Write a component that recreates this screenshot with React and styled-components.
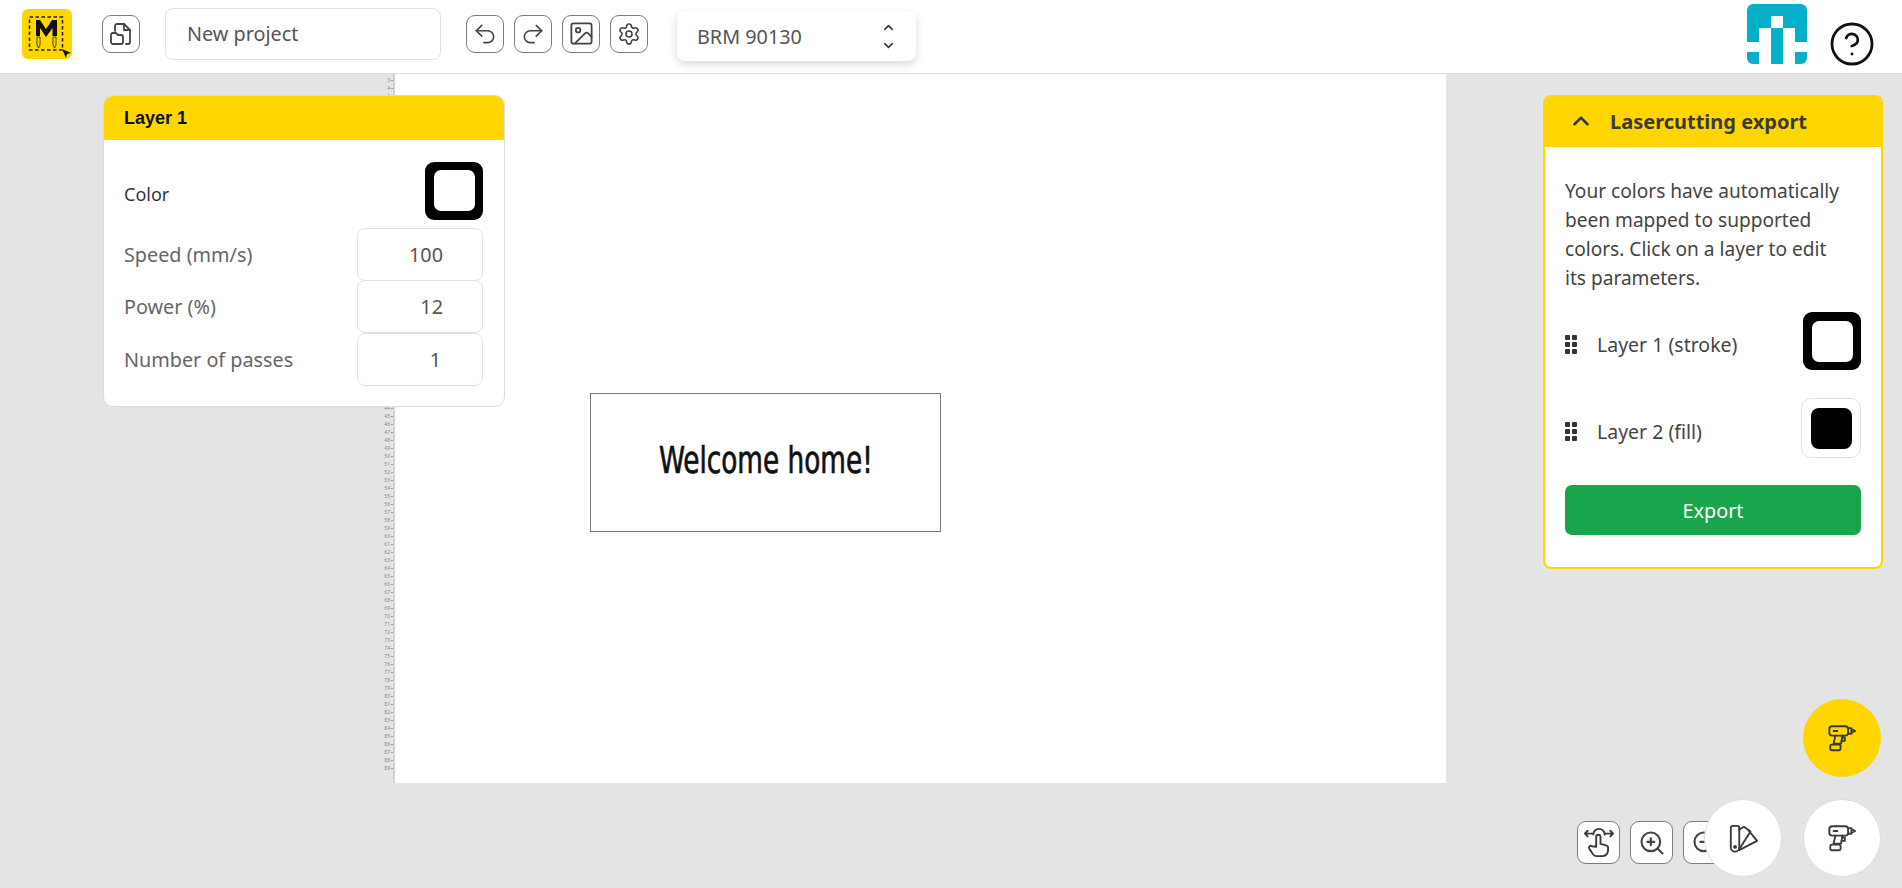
import React from "react";
import styled, { createGlobalStyle } from "styled-components";
import {
  ChevronDown,
  ChevronUp,
  CircleHelp,
  Image,
  Redo2,
  Settings,
  Undo2,
  ZoomIn,
  ZoomOut,
} from "lucide-react";

const rulerMarks = Array.from({ length: 87 }, (_, i) => i + 3);

const Global = createGlobalStyle`
  html, body {
    margin: 0;
    height: 100%;
    overflow: hidden;
    font-family: "Noto Sans", "Open Sans", sans-serif;
    color: #444;
  }
  * { box-sizing: border-box; }
`;

const DrillIcon = () => (
  <svg width="30" height="30" viewBox="0 0 32 32" fill="none" stroke="#3a3a3a" strokeWidth="2" strokeLinejoin="round" strokeLinecap="round">
    <rect x="2.500" y="3.500" width="20" height="10" rx="3" />
    <path d="M7 8.500h4" />
    <path d="M22.500 5.500h3.500v6h-3.500M26 6.500l4 2-4 2" />
    <path d="M9 13.500l-2 8.500h8l1.500-8.500" />
    <path d="M16 15.500h3v3.500h-3.500" />
    <rect x="3.500" y="23" width="11" height="6" rx="1.500" />
  </svg>
);

const SwatchIcon = () => (
  <svg width="30" height="30" viewBox="0 0 32 32" fill="none" stroke="#3a3a3a" strokeWidth="2" strokeLinejoin="round" strokeLinecap="round">
    <path d="M3 5a2 2 0 0 1 2-2h5a2 2 0 0 1 2 2v21a4.500 4.500 0 0 1-9 0z" />
    <circle cx="7.500" cy="25.500" r="1" />
    <path d="M12 7l5-3 7 5-12 19" />
    <path d="M22 8l9 11-19 10" />
  </svg>
);

const PanIcon = () => (
  <svg width="32" height="32" viewBox="0 0 34 34" fill="none" stroke="#3a3a3a" strokeWidth="2" strokeLinejoin="round" strokeLinecap="round">
    <path d="M2 7h8M24 7h8M5 4L2 7l3 3M29 4l3 3-3 3" />
    <path d="M11 8a6 6 0 0 1 12 0" />
    <path d="M14 21V10.500a2.300 2.300 0 0 1 4.600 0V18l6 1.500a2.500 2.500 0 0 1 2 2.500v3a6 6 0 0 1-6 6h-6a5 5 0 0 1-4-2l-4-6a2 2 0 0 1 3-2.500z" />
  </svg>
);

const FileIcon = () => (
  <svg width="24" height="24" viewBox="0 0 24 24" fill="none" stroke="#444" strokeWidth="1.800" strokeLinejoin="round" strokeLinecap="round">
    <path d="M6 9V4a2 2 0 0 1 2-2h7l6 6v12a2 2 0 0 1-2 2h-2" />
    <path d="M15 2v6h6" />
    <path d="M2 13a2 2 0 0 1 2-2h3l2 2h3a2 2 0 0 1 2 2v5a2 2 0 0 1-2 2H4a2 2 0 0 1-2-2z" />
  </svg>
);

const LogoMark = () => (
  <svg width="50" height="50" viewBox="0 0 50 50" fill="none">
    <rect x="7.500" y="8" width="33" height="33" stroke="#222" strokeWidth="1.500" strokeDasharray="3.500 2.500" />
    <path d="M14 27V11h4l6 9 6-9h5v16h-4.500V19l-6.500 9-6-9v8z" fill="#111" />
    <path d="M15 28h3v8l-1.500 3-1.500-3zM31 28h3v8l-1.500 3-1.500-3z" stroke="#444" strokeWidth="1" />
    <path d="M40 40l9 4-4 1-1 4z" fill="#111" />
  </svg>
);

const TealLogo = () => (
  <svg width="60" height="60" viewBox="0 0 60 60">
    <rect width="60" height="60" rx="6" fill="#04afc8" />
    <path d="M24 12h12v12H24zM12 24h12v36H12zM36 24h12v36H36zM0 38h24v10H0zM36 38h24v10H36z" fill="#fff" />
  </svg>
);

const Page = styled.div`
  display: flex;
  flex-direction: column;
  height: 888px;
  background: #e4e4e4;
  position: relative;
  overflow: hidden;
`;

const Header = styled.header`
  display: flex;
  align-items: center;
  height: 74px;
  flex-shrink: 0;
  padding: 0 26px 6px 22px;
  background: #fff;
  border-bottom: 1px solid #ddd;
`;

const AppLogo = styled.div`
  width: 50px;
  height: 50px;
  border-radius: 6px;
  background: #ffd600;
  margin-right: 30px;
`;

const IconButton = styled.button`
  display: flex;
  align-items: center;
  justify-content: center;
  flex-shrink: 0;
  width: ${(p) => p.$size || 38}px;
  height: ${(p) => p.$size || 38}px;
  padding: 0;
  background: #fff;
  border: 1.800px solid #7c7c7c;
  border-radius: 9px;
  color: #444;
`;

const ProjectInput = styled.div`
  display: flex;
  align-items: center;
  width: 276px;
  height: 52px;
  margin: 0 25px 0 25px;
  padding-left: 21px;
  font-size: 19.800px;
  color: #555;
  background: #fff;
  border: 1.500px solid #dfe1e6;
  border-radius: 8px;
`;

const ToolGroup = styled.div`
  display: flex;
  gap: 10px;
`;

const MachineSelect = styled.div`
  display: flex;
  align-items: center;
  justify-content: space-between;
  width: 239px;
  height: 50px;
  margin: 5px 0 0 29px;
  padding: 0 20px;
  font-size: 19.800px;
  color: #555;
  background: #fff;
  border-radius: 8px;
  box-shadow: 0 3px 8px rgba(0, 0, 0, 0.16);
`;

const Chevrons = styled.div`
  display: flex;
  flex-direction: column;
  gap: 3px;
  color: #333;
`;

const HeaderRight = styled.div`
  display: flex;
  align-items: flex-start;
  gap: 21px;
  margin-left: auto;
  align-self: flex-start;
  padding-top: 4px;
`;

const HelpWrap = styled.div`
  margin-top: 16px;
  height: 48px;
`;

const Workspace = styled.main`
  display: flex;
  height: 709px;
  padding-left: 378px;
`;

const Ruler = styled.div`
  width: 17px;
  height: 100%;
  overflow: hidden;
  padding-top: 2px;
  border-right: 2px solid #d0d0d0;
`;

const RulerMark = styled.div`
  display: flex;
  align-items: center;
  justify-content: flex-end;
  gap: 1px;
  height: 8px;
  font-size: 5px;
  line-height: 8px;
  color: #888;

  &::after {
    content: "";
    width: 2px;
    height: 1px;
    background: #999;
  }
`;

const Sheet = styled.div`
  position: relative;
  width: 1051px;
  height: 100%;
  background: #fff;
`;

const Engraving = styled.div`
  position: absolute;
  left: 195px;
  top: 319px;
  display: flex;
  align-items: center;
  justify-content: center;
  width: 351px;
  height: 139px;
  border: 1.500px solid #777;
`;

const EngravingText = styled.span`
  margin-bottom: 6px;
  font-family: "DejaVu Sans Condensed", "DejaVu Sans", sans-serif;
  font-size: 38px;
  color: #111;
  transform: scaleX(0.77);
  white-space: nowrap;
  -webkit-text-stroke: 0.7px #111;
`;

const LayerPanel = styled.section`
  position: absolute;
  left: 103px;
  top: 95px;
  width: 402px;
  height: 312px;
  background: #fff;
  border: 1px solid #dcdcdc;
  border-radius: 10px;
  overflow: hidden;
`;

const LayerTitle = styled.h2`
  display: flex;
  align-items: center;
  height: 44px;
  margin: 0;
  padding-left: 20px;
  background: #ffd600;
  font-family: "Liberation Sans", Arial, sans-serif;
  font-size: 18px;
  font-weight: 700;
  color: #111;
`;

const LayerBody = styled.div`
  display: flex;
  flex-direction: column;
  padding: 16px 21px 0 20px;
`;

const ParamRow = styled.div`
  display: flex;
  align-items: center;
  justify-content: space-between;
  height: ${(p) => p.$height}px;
`;

const ColorRow = styled(ParamRow)`
  margin-bottom: 3px;
`;

const ParamLabel = styled.span`
  font-size: 19.800px;
  color: #666;
`;

const ColorLabel = styled.span`
  padding-top: 7px;
  font-size: 18px;
  font-weight: 400;
  color: #333;
`;

const ParamInput = styled.div`
  width: 126px;
  height: 53px;
  padding-right: ${(p) => p.$pad || 39}px;
  line-height: 51px;
  text-align: right;
  font-size: 19.800px;
  color: #555;
  background: #fff;
  border: 1.500px solid #dfe1e6;
  border-radius: 8px;
`;

const StrokeSwatch = styled.div`
  display: flex;
  align-items: center;
  justify-content: center;
  flex-shrink: 0;
  width: 58px;
  height: 58px;
  background: #000;
  border-radius: 9px;

  &::after {
    content: "";
    width: 41px;
    height: 41px;
    background: #fff;
    border-radius: 7px;
  }
`;

const FillSwatch = styled.div`
  display: flex;
  align-items: center;
  justify-content: center;
  flex-shrink: 0;
  width: 60px;
  height: 60px;
  background: #fff;
  border: 1.500px solid #e0e0e0;
  border-radius: 10px;

  &::after {
    content: "";
    width: 41px;
    height: 41px;
    background: #000;
    border-radius: 8px;
  }
`;

const ExportPanel = styled.section`
  position: absolute;
  left: 1543px;
  top: 95px;
  width: 340px;
  height: 474px;
  background: #fff;
  border: 2px solid #ffd600;
  border-radius: 8px;
  overflow: hidden;
`;

const ExportHeader = styled.div`
  display: flex;
  align-items: center;
  gap: 16px;
  height: 50px;
  padding: 0 0 2px 23px;
  background: #ffd600;
  font-size: 20px;
  font-weight: 700;
  color: #3a3a3a;
`;

const ExportBody = styled.div`
  padding: 30px 20px 0;
`;

const Description = styled.p`
  max-width: 282px;
  margin: 0 0 18px;
  font-size: 19.100px;
  line-height: 29px;
  color: #444;
`;

const LayerRow = styled.div`
  display: flex;
  align-items: center;
  height: 60px;
  margin-bottom: 27px;
  font-size: 19.500px;
  color: #444;
`;

const Grip = styled.div`
  display: grid;
  grid-template-columns: repeat(2, 5px);
  grid-auto-rows: 5px;
  gap: 2px;
  margin: 7px 20px 0 0;

  i {
    background: #333;
    border-radius: 1px;
  }
`;

const LayerName = styled.span`
  flex: 1;
  padding-top: 7px;
`;

const ExportButton = styled.button`
  display: block;
  width: 296px;
  height: 50px;
  margin-top: 2px;
  border: 0;
  border-radius: 7px;
  background: #1aa54d;
  color: #fff;
  font-family: inherit;
  font-size: 19.800px;
`;

const ViewTools = styled.div`
  position: absolute;
  left: 1577px;
  top: 821px;
  display: flex;
  gap: 10px;
`;

const RoundTools = styled.div`
  position: absolute;
  right: 21px;
  bottom: 11px;
  display: grid;
  grid-template-columns: 78px 78px;
  grid-auto-rows: 78px;
  column-gap: 21px;
  row-gap: 22px;
`;

const RoundButton = styled.button`
  grid-column: ${(p) => p.$col};
  grid-row: ${(p) => p.$row};
  display: flex;
  align-items: center;
  justify-content: center;
  padding: 0;
  border: 1px solid ${(p) => (p.$active ? "#ffd600" : "#dcdde6")};
  border-radius: 50%;
  background: ${(p) => (p.$active ? "#ffd600" : "#fff")};
`;

const App = () => {
  return (
    <Page>
      <Global />
      <Header>
        <AppLogo>
          <LogoMark />
        </AppLogo>
        <IconButton>
          <FileIcon />
        </IconButton>
        <ProjectInput>New project</ProjectInput>
        <ToolGroup>
          <IconButton><Undo2 size={26} strokeWidth={1.5} /></IconButton>
          <IconButton><Redo2 size={26} strokeWidth={1.5} /></IconButton>
          <IconButton><Image size={27} strokeWidth={1.6} /></IconButton>
          <IconButton><Settings size={24} strokeWidth={1.6} /></IconButton>
        </ToolGroup>
        <MachineSelect>
          BRM 90130
          <Chevrons>
            <ChevronUp size={15} strokeWidth={2.4} />
            <ChevronDown size={15} strokeWidth={2.4} />
          </Chevrons>
        </MachineSelect>
        <HeaderRight>
          <TealLogo />
          <HelpWrap>
            <CircleHelp size={48} strokeWidth={1.4} color="#111" />
          </HelpWrap>
        </HeaderRight>
      </Header>

      <Workspace>
        <Ruler>
          {rulerMarks.map((n) => (
            <RulerMark key={n}>{n}</RulerMark>
          ))}
        </Ruler>
        <Sheet>
          <Engraving>
            <EngravingText>Welcome home!</EngravingText>
          </Engraving>
        </Sheet>
      </Workspace>

      <LayerPanel>
        <LayerTitle>Layer 1</LayerTitle>
        <LayerBody>
          <ColorRow $height={69}>
            <ColorLabel>Color</ColorLabel>
            <StrokeSwatch />
          </ColorRow>
          <ParamRow $height={52.5}>
            <ParamLabel>Speed (mm/s)</ParamLabel>
            <ParamInput>100</ParamInput>
          </ParamRow>
          <ParamRow $height={52.5}>
            <ParamLabel>Power (%)</ParamLabel>
            <ParamInput>12</ParamInput>
          </ParamRow>
          <ParamRow $height={52.5}>
            <ParamLabel>Number of passes</ParamLabel>
            <ParamInput $pad={41}>1</ParamInput>
          </ParamRow>
        </LayerBody>
      </LayerPanel>

      <ExportPanel>
        <ExportHeader>
          <ChevronUp size={26} strokeWidth={2.4} />
          Lasercutting export
        </ExportHeader>
        <ExportBody>
          <Description>
            Your colors have automatically been mapped to supported colors. Click on a layer to edit its parameters.
          </Description>
          <LayerRow>
            <Grip><i /><i /><i /><i /><i /><i /></Grip>
            <LayerName>Layer 1 (stroke)</LayerName>
            <StrokeSwatch />
          </LayerRow>
          <LayerRow>
            <Grip><i /><i /><i /><i /><i /><i /></Grip>
            <LayerName>Layer 2 (fill)</LayerName>
            <FillSwatch />
          </LayerRow>
          <ExportButton>Export</ExportButton>
        </ExportBody>
      </ExportPanel>

      <ViewTools>
        <IconButton $size={43}><PanIcon /></IconButton>
        <IconButton $size={43}><ZoomIn size={28} strokeWidth={1.8} /></IconButton>
        <IconButton $size={43}><ZoomOut size={28} strokeWidth={1.8} /></IconButton>
      </ViewTools>

      <RoundTools>
        <RoundButton $col={2} $row={1} $active><DrillIcon /></RoundButton>
        <RoundButton $col={1} $row={2}><SwatchIcon /></RoundButton>
        <RoundButton $col={2} $row={2}><DrillIcon /></RoundButton>
      </RoundTools>
    </Page>
  );
};

export default App;
